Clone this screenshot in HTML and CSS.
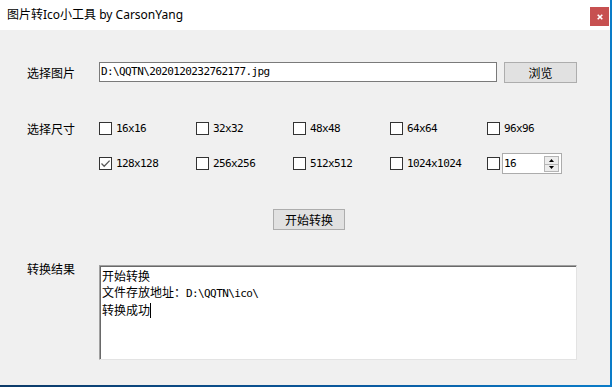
FILE: index.html
```html
<!DOCTYPE html>
<html>
<head>
<meta charset="utf-8">
<title>图片转Ico小工具</title>
<link rel="stylesheet" href="styles.css">
</head>
<body>
<div class="window">
  <div class="titlebar">
    <span class="title">图片转Ico小工具 by CarsonYang</span>
    <div class="close"><svg width="6" height="6" viewBox="0 0 6 6"><path d="M0.7 0.7L5.3 5.3M5.3 0.7L0.7 5.3" stroke="#fff" stroke-width="1.6"/></svg></div>
  </div>
  <div class="client">
    <div class="row row-file">
      <span class="label">选择图片</span>
      <div class="textbox mono">D:\QQTN\2020120232762177.jpg</div>
      <button class="btn btn-browse">浏览</button>
    </div>
    <div class="row row-size">
      <span class="label">选择尺寸</span>
      <div class="sizes">
        <div class="opt"><span class="cb"></span><span class="mono">16x16</span></div>
        <div class="opt"><span class="cb"></span><span class="mono">32x32</span></div>
        <div class="opt"><span class="cb"></span><span class="mono">48x48</span></div>
        <div class="opt"><span class="cb"></span><span class="mono">64x64</span></div>
        <div class="opt"><span class="cb"></span><span class="mono">96x96</span></div>
        <div class="opt"><span class="cb"><svg width="11" height="11" viewBox="0 0 11 11"><path d="M1.5 5.5L4.2 8.2L9.6 2.6" fill="none" stroke="#5a5a5a" stroke-width="1.3"/></svg></span><span class="mono">128x128</span></div>
        <div class="opt"><span class="cb"></span><span class="mono">256x256</span></div>
        <div class="opt"><span class="cb"></span><span class="mono">512x512</span></div>
        <div class="opt"><span class="cb"></span><span class="mono">1024x1024</span></div>
        <div class="opt opt-spin"><span class="cb"></span>
          <div class="spin">
            <span class="mono spin-val">16</span>
            <div class="spin-btns">
              <span class="spin-btn"><svg width="5" height="3" viewBox="0 0 5 3"><path d="M0 3L2.5 0L5 3Z" fill="#000"/></svg></span>
              <span class="spin-btn"><svg width="5" height="3" viewBox="0 0 5 3"><path d="M0 0L2.5 3L5 0Z" fill="#000"/></svg></span>
            </div>
          </div>
        </div>
      </div>
    </div>
    <div class="row row-start">
      <button class="btn btn-start">开始转换</button>
    </div>
    <div class="row row-result">
      <span class="label label-top">转换结果</span>
      <div class="output">
        <div class="line">开始转换</div>
        <div class="line">文件存放地址：<span class="mono">D:\QQTN\ico\</span></div>
        <div class="line">转换成功<span class="caret"></span></div>
      </div>
    </div>
  </div>
</div>
</body>
</html>
```

FILE: styles.css
```css
html, body {
  margin: 0;
  padding: 0;
}

body {
  width: 612px;
  height: 387px;
  overflow: hidden;
  background: linear-gradient(90deg, #0c3a68 0%, #0a5aa0 60%, #0a7cc8 100%);
  font-family: "Noto Sans CJK SC", sans-serif;
  font-size: 12px;
  color: #000;
}

.window {
  width: 610px;
  height: 385px;
  display: flex;
  flex-direction: column;
  background: #f0f0f0;
}

.titlebar {
  height: 30px;
  flex: none;
  background: #fff;
  display: flex;
  align-items: center;
  justify-content: space-between;
  padding: 0 1px 0 7px;
  box-sizing: border-box;
}

.title {
  font-family: "Noto Sans", "Noto Sans CJK SC", sans-serif;
  font-size: 12px;
  line-height: 16px;
}

.close {
  align-self: flex-start;
  margin-top: 7px;
  width: 19px;
  height: 19px;
  background: #c75050;
  display: flex;
  align-items: center;
  justify-content: center;
}

.close svg {
  display: block;
}

.client {
  flex: 1;
  padding: 32px 0 0 27px;
  display: flex;
  flex-direction: column;
}

.row {
  display: flex;
  align-items: flex-start;
}

.label {
  width: 72px;
  flex: none;
  line-height: 21px;
}

.mono {
  font-family: "DejaVu Sans Mono", monospace;
  font-size: 11px;
  letter-spacing: -0.6px;
}

.textbox {
  width: 398px;
  height: 20px;
  box-sizing: border-box;
  border: 1px solid #7a7a7a;
  background: #fff;
  padding-left: 1px;
  line-height: 18px;
  white-space: nowrap;
}

.btn {
  height: 21px;
  box-sizing: border-box;
  background: #e1e1e1;
  border: 1px solid #adadad;
  font-family: "Noto Sans CJK SC", sans-serif;
  font-size: 12px;
  color: #000;
  padding: 0;
  line-height: 19px;
}

.btn-browse {
  width: 73px;
  margin-left: 7px;
}

.row-size {
  margin-top: 35px;
}

.sizes {
  display: grid;
  grid-template-columns: repeat(5, 97px);
  grid-auto-rows: 21px;
  row-gap: 14px;
}

.opt {
  display: flex;
  align-items: center;
  gap: 4px;
  white-space: nowrap;
}

.opt-spin {
  gap: 2px;
}

.cb {
  width: 13px;
  height: 13px;
  box-sizing: border-box;
  border: 1px solid #333;
  background: #fff;
  flex: none;
  display: flex;
  align-items: center;
  justify-content: center;
}

.cb svg {
  display: block;
}

.spin {
  width: 60px;
  height: 21px;
  box-sizing: border-box;
  border: 1px solid #acacac;
  background: #fff;
  display: flex;
  align-items: flex-start;
  padding: 2px 2px 2px 1px;
}

.spin-val {
  line-height: 15px;
}

.spin-btns {
  margin-left: auto;
  width: 15px;
  height: 16px;
  display: flex;
  flex-direction: column;
}

.spin-btn {
  flex: 1;
  box-sizing: border-box;
  border: 1px solid #b5b5b5;
  background: #ececec;
  display: flex;
  align-items: center;
  justify-content: center;
}

.spin-btn + .spin-btn {
  border-top: none;
}

.spin-btn svg {
  display: block;
}

.row-start {
  margin-top: 35px;
}

.btn-start {
  width: 72px;
  margin-left: 246px;
}

.row-result {
  margin-top: 35px;
}

.label-top {
  line-height: 16px;
  margin-top: -4px;
}

.output {
  width: 478px;
  height: 95px;
  box-sizing: border-box;
  background: #fff;
  border: 1px solid;
  border-color: #a0a0a0 #e3e3e3 #e3e3e3 #a0a0a0;
  box-shadow: inset 1px 1px 0 #696969;
  padding: 2px 0 0 2px;
}

.line {
  line-height: 16px;
  white-space: nowrap;
}

.caret {
  display: inline-block;
  width: 1px;
  height: 15px;
  background: #000;
  vertical-align: -3px;
}
```
